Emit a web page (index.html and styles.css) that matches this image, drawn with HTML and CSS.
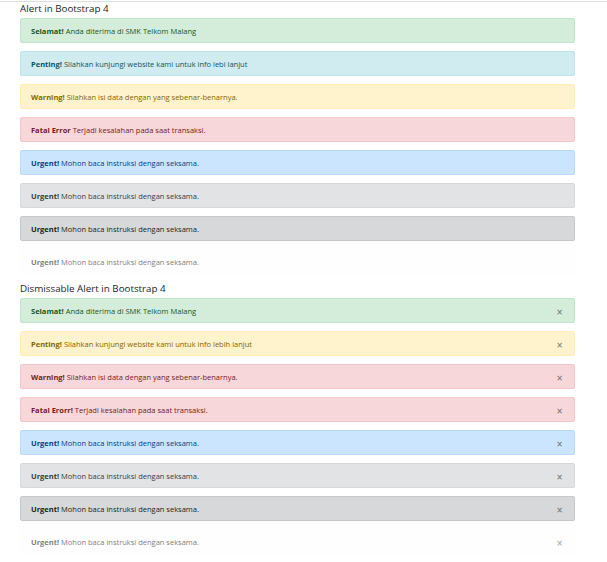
FILE: index.html
```html
<!DOCTYPE html>
<html>
<head>
<meta charset="utf-8">
<link rel="stylesheet" href="styles.css">
</head>
<body>
<div class="page">
  <div class="container">
    <h5 class="title">Alert in Bootstrap 4</h5>
    <div class="alert alert-success"><strong>Selamat!</strong> Anda diterima di SMK Telkom Malang</div>
    <div class="alert alert-info"><strong>Penting!</strong> Silahkan kunjungi website kami untuk info lebi lanjut</div>
    <div class="alert alert-warning"><strong>Warning!</strong> Silahkan isi data dengan yang sebenar-benarnya.</div>
    <div class="alert alert-danger"><strong>Fatal Error</strong> Terjadi kesalahan pada saat transaksi.</div>
    <div class="alert alert-primary"><strong>Urgent!</strong> Mohon baca instruksi dengan seksama.</div>
    <div class="alert alert-secondary"><strong>Urgent!</strong> Mohon baca instruksi dengan seksama.</div>
    <div class="alert alert-dark"><strong>Urgent!</strong> Mohon baca instruksi dengan seksama.</div>
    <div class="alert alert-light"><strong>Urgent!</strong> Mohon baca instruksi dengan seksama.</div>

    <h5 class="title">Dismissable Alert in Bootstrap 4</h5>
    <div class="alert alert-success dismissible"><span><strong>Selamat!</strong> Anda diterima di SMK Telkom Malang</span><button class="close">&times;</button></div>
    <div class="alert alert-warning dismissible"><span><strong>Penting!</strong> Silahkan kunjungi website kami untuk info lebih lanjut</span><button class="close">&times;</button></div>
    <div class="alert alert-danger dismissible"><span><strong>Warning!</strong> Silahkan isi data dengan yang sebenar-benarnya.</span><button class="close">&times;</button></div>
    <div class="alert alert-danger dismissible"><span><strong>Fatal Erorr!</strong> Terjadi kesalahan pada saat transaksi.</span><button class="close">&times;</button></div>
    <div class="alert alert-primary dismissible"><span><strong>Urgent!</strong> Mohon baca instruksi dengan seksama.</span><button class="close">&times;</button></div>
    <div class="alert alert-secondary dismissible"><span><strong>Urgent!</strong> Mohon baca instruksi dengan seksama.</span><button class="close">&times;</button></div>
    <div class="alert alert-dark dismissible"><span><strong>Urgent!</strong> Mohon baca instruksi dengan seksama.</span><button class="close">&times;</button></div>
    <div class="alert alert-light dismissible"><span><strong>Urgent!</strong> Mohon baca instruksi dengan seksama.</span><button class="close">&times;</button></div>
  </div>
</div>
</body>
</html>
```
FILE: styles.css
```css
html, body {
  margin: 0;
  padding: 0;
  background: #fff;
}
body {
  font-family: "Open Sans", "Noto Sans", sans-serif;
  color: #212529;
}
.page {
  margin-top: 1px;
  border-top: 1px solid #dedede;
}
.container {
  padding: 0 32px 0 20px;
}
.title {
  margin: 0 0 3px 0;
  font-size: 9.8px;
  line-height: 13px;
  font-weight: 400;
  color: #212529;
}
.alert {
  box-sizing: border-box;
  height: 25px;
  margin-bottom: 8px;
  padding: 7px 10px 5px;
  border: 1px solid transparent;
  border-radius: 2px;
  font-size: 7.5px;
  line-height: 11px;
  display: block;
}
.alert strong { font-weight: 700; }
.dismissible {
  display: flex;
  align-items: center;
  justify-content: space-between;
}
.close {
  border: 0;
  background: transparent;
  padding: 0;
  margin: 1px 1px 0 0;
  font-family: "DejaVu Sans", sans-serif;
  font-size: 8px;
  line-height: 11px;
  font-weight: 700;
  color: #000;
  opacity: .45;
  text-shadow: 0 1px 0 #fff;
}
.alert-success { color: #155724; background: #d4edda; border-color: #c3e6cb; }
.alert-info { color: #0c5460; background: #d1ecf1; border-color: #bee5eb; }
.alert-warning { color: #856404; background: #fff3cd; border-color: #ffeeba; }
.alert-danger { color: #721c24; background: #f8d7da; border-color: #f5c6cb; }
.alert-primary { color: #004085; background: #cce5ff; border-color: #b8daff; }
.alert-secondary { color: #383d41; background: #e2e3e5; border-color: #d6d8db; }
.alert-dark { color: #1b1e21; background: #d6d8d9; border-color: #c6c8ca; }
.alert-light { color: #818182; background: #fefefe; border-color: #fdfdfe; }
.alert-light .close { opacity: .3; }
```
